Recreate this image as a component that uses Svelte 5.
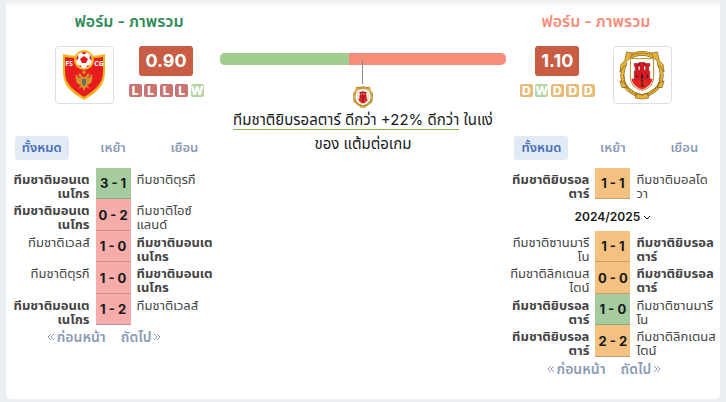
<script>
  /**
   * FormComparison: overall form of two teams, side by side.
   * Each side has a badge, points per game, last results and a match list.
   */

  const teams = [
    {
      side: 'home',
      ppg: '0.90',
      form: ['L', 'L', 'L', 'L', 'W'],
      rows: [
        { home: 'ทีมชาติมอนเต\nเนโกร', score: '3 - 1', away: 'ทีมชาติตุรกี', own: 'home', result: 'win' },
        { home: 'ทีมชาติมอนเต\nเนโกร', score: '0 - 2', away: 'ทีมชาติไอซ์\nแลนด์', own: 'home', result: 'loss' },
        { home: 'ทีมชาติเวลส์', score: '1 - 0', away: 'ทีมชาติมอนเต\nเนโกร', own: 'away', result: 'loss' },
        { home: 'ทีมชาติตุรกี', score: '1 - 0', away: 'ทีมชาติมอนเต\nเนโกร', own: 'away', result: 'loss' },
        { home: 'ทีมชาติมอนเต\nเนโกร', score: '1 - 2', away: 'ทีมชาติเวลส์', own: 'home', result: 'loss' },
      ],
    },
    {
      side: 'away',
      ppg: '1.10',
      form: ['D', 'W', 'D', 'D', 'D'],
      rows: [
        { home: 'ทีมชาติยิบรอล\nตาร์', score: '1 - 1', away: 'ทีมชาติมอลโด\nวา', own: 'home', result: 'draw' },
        { season: '2024/2025' },
        { home: 'ทีมชาติซานมารี\nโน', score: '1 - 1', away: 'ทีมชาติยิบรอล\nตาร์', own: 'away', result: 'draw' },
        { home: 'ทีมชาติลิกเตนส\nไตน์', score: '0 - 0', away: 'ทีมชาติยิบรอล\nตาร์', own: 'away', result: 'draw' },
        { home: 'ทีมชาติยิบรอล\nตาร์', score: '1 - 0', away: 'ทีมชาติซานมารี\nโน', own: 'home', result: 'win' },
        { home: 'ทีมชาติยิบรอล\nตาร์', score: '2 - 2', away: 'ทีมชาติลิกเตนส\nไตน์', own: 'home', result: 'draw' },
      ],
    },
  ];

  const tabs = ['ทั้งหมด', 'เหย้า', 'เยือน'];
  const homeShare = 45;

  let active = $state({ home: 0, away: 0 });
</script>

{#snippet montenegro()}
  <svg class="crest" viewBox="0 0 50 50" aria-hidden="true">
    <path d="M4 4 Q14 7 25 5 Q36 7 46 4 V22 C46 36 37 43 25 50 C13 43 4 36 4 22 Z" fill="#f2b61d" />
    <path d="M6 7 Q15 9 25 7 Q35 9 44 7 V22 C44 34 35 41 25 47 C15 41 6 34 6 22 Z" fill="#e81c20" />
    <g fill="#d9922b">
      <path d="M24 27 L21 23 L19 25 L22 28 C19 28 18 25 17 24 C16 30 17 34 22 35 L19 39 L23 37 L25 41 L27 37 L31 39 L28 35 C33 34 34 30 33 24 C32 25 31 28 28 28 L31 25 L29 23 L26 27 Z" />
      <path d="M23 22 L25 20 L27 22 L26 24 H24 Z" />
    </g>
    <path d="M23 29 H27 V33 Q27 35 25 36 Q23 35 23 33 Z" fill="#5d7468" />
    <circle cx="25" cy="10" r="10" fill="#f2b61d" />
    <circle cx="25" cy="10" r="8" fill="#fff" />
    <g fill="#e3191c">
      <path d="M25 6 L29 9 L27 13 H23 L21 9 Z" />
      <path d="M22 2.6 Q25 1.5 28 2.6 L25 4.4 Z" />
      <path d="M17.3 8 L19 5 L19.6 8 L17.5 11 Z" />
      <path d="M32.7 8 L31 5 L30.4 8 L32.5 11 Z" />
      <path d="M19 15 L22 15.4 L22.4 17.6 Z M31 15 L28 15.4 L27.6 17.6 Z" />
    </g>
    <text x="10" y="16" text-anchor="middle" class="crest-text">FS</text>
    <text x="40" y="16" text-anchor="middle" class="crest-text">CG</text>
  </svg>
{/snippet}

{#snippet gibraltar()}
  <svg class="crest" viewBox="-1 0 52 50" aria-hidden="true">
    <g fill="none" stroke-linejoin="round">
      <path d="M7 14 Q2 25 7 36 Q14 45 25 47 Q36 45 43 36 Q48 25 43 14" stroke="#6b5019" stroke-width="4" />
      <path d="M7 14 Q2 25 7 36 Q14 45 25 47 Q36 45 43 36 Q48 25 43 14" stroke="#e6b233" stroke-width="3" />
      <path d="M11 4 L14 5 Q25 0 36 5 L39 4" stroke="#6b5019" stroke-width="5" />
      <path d="M11 4 L14 5 Q25 0 36 5 L39 4" stroke="#e6b233" stroke-width="4" />
    </g>
    <g fill="#e6b233" stroke="#6b5019" stroke-width="0.6">
      <path d="M9 1 L15 2 L13 7 L9 11 L9 15 L6 16 L2 22 L3 14 L7 10 Z" />
      <path d="M41 1 L35 2 L37 7 L41 11 L41 15 L44 16 L48 22 L47 14 L43 10 Z" />
      <path d="M2 31 L8 34 L9 38 L4 38 Z M48 31 L42 34 L41 38 L46 38 Z" />
      <path d="M19 44 L25 46 L31 44 L32 49 L25 50 L18 49 Z" />
    </g>
    <path
      d="M15 4 Q25 1 35 4 M6 25 Q6 40 21 46 M44 25 Q44 40 29 46"
      fill="none"
      stroke="#765818"
      stroke-width="1.4"
      stroke-dasharray="1 1.5"
    />
    <path d="M13 8 H37 V28 Q37 38 25 41 Q13 38 13 28 Z" fill="#fff" stroke="#b78a2a" />
    <path d="M14 29 H36 Q35 37 25 40 Q15 37 14 29 Z" fill="#e62424" />
    <path
      d="M17 29 V21 H18 V16 H17 V13 H22 V16 H21 V20 H23 V15 H22 V12 H28 V15 H27 V20 H29 V16 H28 V13 H33 V16 H32 V21 H33 V29 Z"
      fill="#d8181f"
      stroke="#7a141a"
      stroke-width="0.6"
    />
    <path d="M24 29 V25 Q25 23 26 25 V29 Z M19 25 H20 V28 H19 Z M30 25 H31 V28 H30 Z" fill="#4b151a" />
    <path d="M25 30 V37 M25 36 H27 M24 31 H26" stroke="#3b2417" stroke-width="1.2" fill="none" />
  </svg>
{/snippet}

{#snippet angles(dir)}
  <svg class="angles" viewBox="0 0 8 8" aria-hidden="true">
    <path d={dir === 'prev' ? 'M4 1 L1 4 L4 7 M7 1 L4 4 L7 7' : 'M1 1 L4 4 L1 7 M4 1 L7 4 L4 7'} />
  </svg>
{/snippet}

{#snippet column(team)}
  <section class="team {team.side}">
    <header class="summary">
      <h2>ฟอร์ม - ภาพรวม</h2>
      <div class="overview">
        <div class="badge">
          {#if team.side === 'home'}{@render montenegro()}{:else}{@render gibraltar()}{/if}
        </div>
        <div class="stats">
          <strong class="ppg">{team.ppg}</strong>
          <div class="form">
            {#each team.form as r}<span class={r}>{r}</span>{/each}
          </div>
        </div>
      </div>
    </header>

    <nav class="tabs">
      {#each tabs as tab, i}
        <button class:active={active[team.side] === i} onclick={() => (active[team.side] = i)}>{tab}</button>
      {/each}
    </nav>

    <table>
      <tbody>
        {#each team.rows as row}
          <tr>
            {#if row.season}
              <td class="season" colspan="3">
                <button>
                  {row.season}<svg class="caret" viewBox="0 0 8 8" aria-hidden="true"><path d="M1 3 L4 6 L7 3" /></svg>
                </button>
              </td>
            {:else}
              <td class="name left" class:own={row.own === 'home'}><div>{row.home}</div></td>
              <td class="score {row.result}">{row.score}</td>
              <td class="name" class:own={row.own === 'away'}><div>{row.away}</div></td>
            {/if}
          </tr>
        {/each}
      </tbody>
    </table>

    <div class="pager">
      <button>{@render angles('prev')}ก่อนหน้า</button>
      <button>ถัดไป{@render angles('next')}</button>
    </div>
  </section>
{/snippet}

<main>
  <div class="card">
    {@render column(teams[0])}

    <section class="compare">
      <div class="bar"><span style="width: {homeShare}%"></span></div>
      <div class="pointer"></div>
      <div class="mini">{@render gibraltar()}</div>
      <p><span>ทีมชาติยิบรอลตาร์ ดีกว่า +22% ดีกว่า</span> ในแง่<br />ของ แต้มต่อเกม</p>
    </section>

    {@render column(teams[1])}
  </div>
</main>

<style>
  :global(body) {
    margin: 0;
    background: #ebeff3;
  }

  main {
    padding: 0 6px 3px;
    font-family: Inter, "Noto Sans Thai", "Noto Sans", sans-serif;
    color: #16191c;
  }

  .card {
    display: grid;
    grid-template-columns: 3fr 4fr 3fr;
    padding-bottom: 18px;
    border-radius: 0 0 5px 5px;
    background: linear-gradient(#eceeed, #fff 7px);
  }

  .team {
    min-width: 0;
  }

  button {
    padding: 0;
    border: 0;
    background: none;
    font-family: inherit;
    cursor: pointer;
  }

  .summary {
    height: 136px;
    box-sizing: border-box;
    padding-top: 10px;
  }

  .home .summary {
    padding-left: 32px;
  }

  .away .summary {
    padding-right: 34px;
  }

  h2 {
    margin: 0 0 14px;
    font-size: 16px;
    line-height: 22px;
    font-weight: 600;
    text-align: center;
    color: #2e8b57;
  }

  .away h2 {
    color: #f78c78;
  }

  .overview {
    display: flex;
    justify-content: center;
    gap: 15px;
  }

  .away .overview {
    flex-direction: row-reverse;
    gap: 18px;
  }

  .badge {
    width: 59px;
    height: 58px;
    box-sizing: border-box;
    padding: 3px;
    border: 1px solid #dcdde6;
    border-radius: 4px;
    display: flex;
    justify-content: center;
  }

  .crest {
    display: block;
    width: 50px;
    height: 50px;
  }

  .crest-text {
    font: 700 7px "Open Sans", sans-serif;
    fill: #fff;
  }

  .stats {
    display: flex;
    flex-direction: column;
    align-items: center;
    gap: 8px;
  }

  .ppg {
    padding: 0 6px;
    border-radius: 3px;
    background: #c85d44;
    color: #fff;
    font-size: 18px;
    line-height: 30px;
    font-weight: 700;
  }

  .form {
    display: flex;
    justify-content: space-between;
    width: 75px;
  }

  .form span {
    width: 13px;
    border-radius: 2px;
    font-size: 12px;
    line-height: 13px;
    font-weight: 800;
    text-align: center;
    color: #fff;
  }

  .L {
    background: #c97470;
  }

  .W {
    background: #b3d6a4;
  }

  .D {
    background: #e8bc78;
  }

  .tabs {
    display: grid;
    grid-template-columns: repeat(3, 1fr);
    justify-items: center;
    margin-bottom: 8px;
  }

  .tabs button {
    width: 54px;
    height: 24px;
    border-radius: 3px;
    font-size: 13px;
    font-weight: 600;
    color: #8b9bb5;
  }

  .tabs .active {
    background: #e2ebf5;
    color: #4670b8;
  }

  table {
    width: 100%;
    table-layout: fixed;
    border-collapse: separate;
    border-spacing: 0;
  }

  tr {
    height: 31px;
  }

  tr:nth-child(even) {
    height: 32px;
  }

  td {
    padding: 0;
  }

  .name {
    vertical-align: top;
    font-size: 13px;
    line-height: 14px;
    color: #444;
  }

  .name div {
    height: 27px;
    padding: 4px 0 0 6px;
    white-space: pre;
  }

  .name.left div {
    padding: 4px 6px 0 0;
    text-align: right;
  }

  .name.own {
    font-weight: 700;
  }

  .score {
    width: 35px;
    border-bottom: 1px solid #c89f6c;
    text-align: center;
    font-size: 13px;
    font-weight: 700;
    white-space: nowrap;
  }

  .win {
    background: #a5cb9e;
    border-color: #87a983;
  }

  .loss {
    background: #f6aca9;
    border-color: #ce9090;
  }

  .draw {
    background: #f5c180;
  }

  .season {
    text-align: center;
  }

  .season button {
    font-size: 12px;
    font-weight: 600;
    color: #16191c;
  }

  .caret,
  .angles {
    width: 8px;
    height: 8px;
    fill: none;
    stroke: currentColor;
  }

  .caret {
    margin-left: 3px;
  }

  .pager {
    display: flex;
    justify-content: center;
    gap: 15px;
    padding-right: 18px;
  }

  .pager button {
    display: flex;
    align-items: center;
    gap: 2px;
    font-size: 14px;
    line-height: 24px;
    font-weight: 600;
    color: #8b9bb5;
  }

  .compare {
    padding-top: 53px;
    text-align: center;
  }

  .bar {
    height: 12px;
    border-radius: 5px;
    background: #f68d78;
    overflow: hidden;
  }

  .bar span {
    display: block;
    height: 100%;
    background: #a3cd90;
  }

  .pointer {
    width: 1px;
    height: 24px;
    margin: -5px auto 2px;
    background: #888;
    position: relative;
  }

  .mini .crest {
    width: 22px;
    height: 22px;
    margin: 0 auto;
  }

  .compare p {
    margin: 0;
    font-size: 15px;
    line-height: 24px;
    white-space: nowrap;
  }

  .compare p span {
    border-bottom: 1px solid #7ab84e;
  }
</style>
